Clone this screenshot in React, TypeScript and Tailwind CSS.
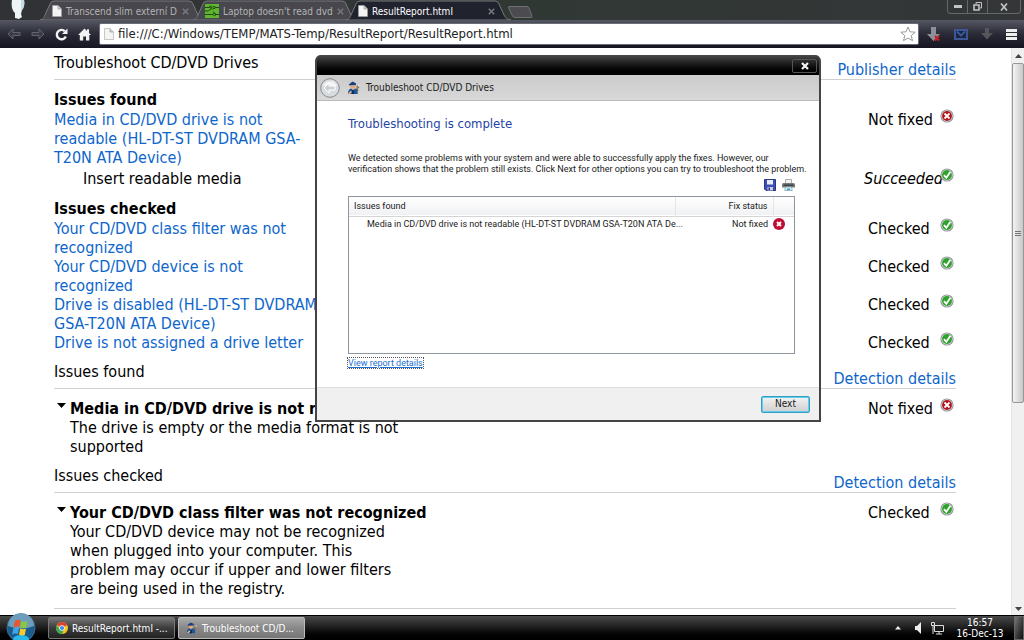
import type { ReactNode } from 'react';

type Status = 'ok' | 'error';

interface Issue {
  lines: string;
  label: string;
  status: Status;
}

const checkedIssues: Issue[] = [
  { lines: 'Your CD/DVD class filter was not\nrecognized', label: 'Checked', status: 'ok' },
  { lines: 'Your CD/DVD device is not\nrecognized', label: 'Checked', status: 'ok' },
  { lines: 'Drive is disabled (HL-DT-ST DVDRAM\nGSA-T20N ATA Device)', label: 'Checked', status: 'ok' },
  { lines: 'Drive is not assigned a drive letter', label: 'Checked', status: 'ok' },
];

function StatusIcon({ status }: { status: Status }) {
  return (
    <svg viewBox="0 0 14 14" className="-mt-px h-3.5 w-3.5 shrink-0">
      <circle cx="7" cy="7" r="6.6" fill="#8d9196" />
      <circle cx="7" cy="7" r="5.7" fill="#d5d8da" />
      <circle cx="7" cy="7" r="4.9" fill={status === 'ok' ? '#2ea32a' : '#b5121b'} />
      {status === 'ok' ? (
        <path d="M4 7.2 6.3 9.8 10.4 3.8" fill="none" stroke="#fff" strokeWidth="1.8" />
      ) : (
        <path d="M4.5 4.5l5 5M9.5 4.5L4.5 9.5" stroke="#fff" strokeWidth="1.8" />
      )}
    </svg>
  );
}

function PersonIcon({ className }: { className?: string }) {
  return (
    <svg viewBox="0 0 14 14" className={className}>
      <path d="M1.8 3.4 5.5.5 9.2 2.4 8.8 4.2 2.4 4.6Z" fill="#173f7c" />
      <path d="M3 4.4h5.2v2L5.8 8.2 3.4 6.8Z" fill="#e9a874" />
      <path d="M1 13c0-3.6 1.2-5.2 3.2-5.6L6 9l2-1.6c2 .4 2.8 2 2.8 5.600Z" fill="#1e5799" />
      <path d="M5.4 9h1.200l.6 4H4.800Z" fill="#0f2a50" />
      <path d="M1 12.800 3.600 10l1.400.8L3 13.200Z" fill="#f0b57f" />
      <path d="M11 10 9.800 7" fill="none" stroke="#7b6247" strokeWidth="1.400" />
      <circle cx="10.800" cy="5.800" r="1.600" fill="#8c7d6a" />
      <circle cx="11.800" cy="4.800" r=".8" fill="#fff" />
    </svg>
  );
}

function PageIcon() {
  return (
    <svg viewBox="0 0 10 12" className="h-3 w-2.5 shrink-0">
      <path d="M.5.5h5.6L9.5 4v7.5h-9Z" fill="#f4f4f4" stroke="#a5a5a5" strokeWidth=".6" />
      <path d="M6 .6V4h3.4" fill="#cfcfcf" stroke="#8c8c8c" strokeWidth=".6" />
    </svg>
  );
}

function BoardIcon() {
  return (
    <svg viewBox="0 0 14 14" className="h-3.5 w-3.5 shrink-0">
      <rect width="14" height="14" fill="#62b52e" />
      <g fill="none" stroke="#1d4a12" strokeWidth="1">
        <path d="M0 3.5h4.5M0 7h3.500l2-2h2M0 10.500h8M14 3.500H10M14 10.500h-3.500L8 7.500" />
        <circle cx="5.500" cy="3" r="1" />
        <circle cx="9" cy="3.500" r="1.200" />
        <circle cx="9.500" cy="10.500" r="1.200" />
      </g>
    </svg>
  );
}

function Tab({ title, icon, active }: { title: string; icon: ReactNode; active?: boolean }) {
  return (
    <div className={`relative -mr-3 h-5 w-[165px] ${active ? 'z-10' : ''}`}>
      <svg viewBox="0 0 165 20" preserveAspectRatio="none" className="absolute inset-0 h-full w-full">
        <path
          d="M0 20C4 19 4 17 5 15L10 4Q11 1 14 1H149Q152 1 153 4L158 15C160 18 160 19 165 20Z"
          fill={active ? '#20222e' : '#47474d'}
          stroke="#77797d"
        />
      </svg>
      <div className="relative flex h-full items-center gap-1 pt-0.5 pr-4 pl-3">
        {icon}
        <button className={`flex-1 text-left text-[10px] whitespace-nowrap ${active ? 'text-white' : 'text-[#b4b4b4]'}`}>
          {title}
        </button>
        <button aria-label="Close tab" className="text-[#77777c]">
          <svg viewBox="0 0 7 7" className="h-[7px] w-[7px]">
            <path d="M.8.8l5.4 5.4M6.2.8L.8 6.2" stroke="currentColor" strokeWidth="1.6" />
          </svg>
        </button>
      </div>
    </div>
  );
}

function WindowButtons() {
  return (
    <div className="mr-[3px] ml-auto flex h-3.5 rounded-b border border-t-0 border-[#63686a] text-[#c2c4c4]">
      <button aria-label="Minimize" className="flex w-5 items-center justify-center border-r border-[#63686a]">
        <span className="h-[3px] w-2 bg-[#c2c4c4]" />
      </button>
      <button aria-label="Restore" className="flex w-5 items-center justify-center border-r border-[#63686a]">
        <svg viewBox="0 0 9 9" className="h-[9px] w-[9px]" fill="none" stroke="currentColor">
          <path d="M3 2.5v-2h5.5V6H7" />
          <path d="M1 3h5v5H1Z" strokeWidth="1.6" />
        </svg>
      </button>
      <button aria-label="Close" className="flex w-8 items-center justify-center">
        <svg viewBox="0 0 8 8" className="h-2 w-2">
          <path d="M1 .5l6 7M7 .5L1 7.5" stroke="currentColor" strokeWidth="1.7" />
        </svg>
      </button>
    </div>
  );
}

function TabStrip() {
  return (
    <div className="flex h-5 bg-linear-to-r from-[#303235] via-[#303834] to-[#343638]">
      <div className="w-10">
        <svg viewBox="0 0 40 20" className="h-5 w-10">
          <path d="M12 0h12c1 4 0 8-2 10l-1 4 1 3-3 2-4-1 0-5c-3-2-4-8-3-13Z" fill="#eef3f6" />
          <path d="M21 0h3c1 5-1 9-3 11Z" fill="#c5dbe7" />
        </svg>
      </div>
      <Tab title="Transcend slim externí D" icon={<PageIcon />} />
      <Tab title="Laptop doesn't read dvd" icon={<BoardIcon />} />
      <Tab title="ResultReport.html" icon={<PageIcon />} active />
      <button aria-label="New tab" className="mt-1 ml-2">
        <svg viewBox="0 0 26 12" className="h-3 w-[26px]">
          <path d="M2 .5h18q1.5 0 2 1.5l3 8q.5 1.5-1 1.5H8q-2 0-2.5-1.5L1.5 2Q1 .5 2 .5Z" fill="#4b4b50" stroke="#6d6f72" />
        </svg>
      </button>
      <WindowButtons />
    </div>
  );
}

function Toolbar() {
  return (
    <div className="flex h-7 items-center bg-linear-to-b from-[#555762] via-[#2a2b37] to-[#141520] px-[7px]">
      <div className="flex w-[92px] items-center gap-2.5">
        <button aria-label="Back">
          <svg viewBox="0 0 14 12" className="h-3 w-3.5" fill="#3a3b44" stroke="#62646d">
            <path d="M1 6l5-5v3.5h7v3H6V11Z" />
          </svg>
        </button>
        <button aria-label="Forward">
          <svg viewBox="0 0 14 12" className="h-3 w-3.5" fill="#3a3b44" stroke="#62646d">
            <path d="M13 6L8 1v3.5H1v3h7V11Z" />
          </svg>
        </button>
        <button aria-label="Reload">
          <svg viewBox="0 0 13 13" className="h-[13px] w-[13px]">
            <path d="M9.8 3.2A4.7 4.7 0 1 0 10.8 8.5" fill="none" stroke="#f2f2f2" strokeWidth="2.4" />
            <path d="M12.5.5v5.5H7Z" fill="#f2f2f2" />
          </svg>
        </button>
        <button aria-label="Home">
          <svg viewBox="0 0 13 13" className="h-[13px] w-[13px]" fill="#f2f2f2">
            <path d="M6.5.5 9 3V1.2h2V5l2 2h-1.7v5.5H8V8.5H5.2v4H1.8V7H0Z" />
          </svg>
        </button>
      </div>
      <div className="flex h-[22px] flex-1 items-center gap-1 rounded-xs border border-[#6b6d75] bg-white pr-0.5 pl-1">
        <PageIcon />
        <input
          aria-label="Address"
          defaultValue="file:///C:/Windows/TEMP/MATS-Temp/ResultReport/ResultReport.html"
          className="min-w-0 flex-1 text-[13px] leading-5 text-[#222] outline-none"
        />
        <button aria-label="Bookmark">
          <svg viewBox="0 0 16 16" className="h-4 w-4">
            <path d="M8 1l2 4.8 5.2.4-4 3.4 1.3 5.1L8 12l-4.5 2.7 1.3-5.1-4-3.4L6 5.8Z" fill="#fff" stroke="#999" />
          </svg>
        </button>
      </div>
      <div className="ml-[7px] flex items-center gap-[13px]">
        <button aria-label="Download manager">
          <svg viewBox="0 0 15 15" className="h-[15px] w-[15px]">
            <path d="M5 0h5v7h4l-6.5 7L1 7h4Z" fill="#8d9299" />
            <path d="M9 9l4 4.5M13 9l-4 4.5" stroke="#c61f2b" strokeWidth="2" />
          </svg>
        </button>
        <button aria-label="Mail">
          <svg viewBox="0 0 14 11" className="h-[11px] w-3.5" fill="#1c2440" stroke="#3c5796" strokeWidth="2">
            <path d="M1 1h12v9H1Z" />
            <path d="M3 2.5l4 4 4-4" fill="none" />
          </svg>
        </button>
        <button aria-label="Downloads">
          <svg viewBox="0 0 12 12" className="h-3 w-3">
            <path d="M4 0h4v5h4l-6 6.5L0 5h4Z" fill="#55565a" />
          </svg>
        </button>
        <button aria-label="Menu" className="flex w-[11px] flex-col gap-px">
          <span className="h-[3px] bg-[#eee]" />
          <span className="h-[3px] bg-[#eee]" />
          <span className="h-[3px] bg-[#eee]" />
        </button>
      </div>
    </div>
  );
}

function SectionHeader({ title, link }: { title: string; link: string }) {
  return (
    <div className="flex h-8 justify-between border-b border-[#d0d0d0] pt-[5px]">
      <h2>{title}</h2>
      <a href="#details" className="mt-[7px] text-[#0e66cc]">
        {link}
      </a>
    </div>
  );
}

function StatusCell({ label, status, italic }: { label: string; status: Status; italic?: boolean }) {
  return (
    <div className="flex w-[88px] shrink-0">
      <span className={`whitespace-nowrap ${italic ? '-ml-1 w-[76px] italic' : 'w-[72px]'}`}>{label}</span>
      <StatusIcon status={status} />
    </div>
  );
}

function IssueRow({ lines, label, status }: Issue) {
  return (
    <div className="flex justify-between">
      <a href="#issue" className="whitespace-pre text-[#0e66cc]">
        {lines}
      </a>
      <StatusCell label={label} status={status} />
    </div>
  );
}

function IssueDetail({ title, text, label, status }: { title: string; text: string; label: string; status: Status }) {
  return (
    <div className="flex justify-between pt-2.5">
      <div className="flex gap-1">
        <svg viewBox="0 0 9 5" className="mt-1 ml-[3px] h-[5px] w-[9px]">
          <path d="M0 0h9L4.5 5Z" />
        </svg>
        <div>
          <h3 className="font-bold">{title}</h3>
          <p className="whitespace-pre">{text}</p>
        </div>
      </div>
      <StatusCell label={label} status={status} />
    </div>
  );
}

function Report() {
  return (
    <main className="min-w-0 flex-1 overflow-hidden pr-[55px] pl-[54px] text-base leading-[19px] text-black">
      <SectionHeader title="Troubleshoot CD/DVD Drives" link="Publisher details" />
      <h3 className="mt-2.5 mb-px font-bold">Issues found</h3>
      <IssueRow
        lines={'Media in CD/DVD drive is not\nreadable (HL-DT-ST DVDRAM GSA-\nT20N ATA Device)'}
        label="Not fixed"
        status="error"
      />
      <div className="mt-0.5 flex justify-between pl-[29px]">
        <span>Insert readable media</span>
        <StatusCell label="Succeeded" status="ok" italic />
      </div>
      <h3 className="mt-[11px] mb-px font-bold">Issues checked</h3>
      {checkedIssues.map((issue) => (
        <IssueRow key={issue.lines} {...issue} />
      ))}
      <div className="mt-[5px]">
        <SectionHeader title="Issues found" link="Detection details" />
        <IssueDetail
          title="Media in CD/DVD drive is not readable"
          text={'The drive is empty or the media format is not\nsupported'}
          label="Not fixed"
          status="error"
        />
      </div>
      <div className="mt-[5px]">
        <SectionHeader title="Issues checked" link="Detection details" />
        <IssueDetail
          title="Your CD/DVD class filter was not recognized"
          text={
            'Your CD/DVD device may not be recognized\nwhen plugged into your computer. This\nproblem may occur if upper and lower filters\nare being used in the registry.'
          }
          label="Checked"
          status="ok"
        />
      </div>
      <hr className="mt-2.5 border-[#d0d0d0]" />
    </main>
  );
}

function ScrollBar() {
  return (
    <div className="flex w-[13px] flex-col border-l border-[#e4e4e4] bg-[#f0f0f0]">
      <div className="flex h-[15px] items-center justify-center">
        <svg viewBox="0 0 7 4" className="h-1 w-[7px]">
          <path d="M0 4L3.5 0 7 4Z" fill="#444" />
        </svg>
      </div>
      <div className="flex h-3/5 flex-col items-center justify-center gap-px rounded-xs border border-[#979797] bg-linear-to-r from-[#f4f4f4] to-[#c8c8cc]">
        <span className="h-px w-1.5 bg-[#777]" />
        <span className="h-px w-1.5 bg-[#777]" />
        <span className="h-px w-1.5 bg-[#777]" />
      </div>
      <div className="mt-auto flex h-[13px] items-center justify-center">
        <svg viewBox="0 0 7 4" className="h-1 w-[7px]">
          <path d="M0 0h7L3.5 4Z" fill="#444" />
        </svg>
      </div>
    </div>
  );
}

function TroubleshootDialog() {
  return (
    <section
      role="dialog"
      aria-label="Troubleshoot CD/DVD Drives"
      className="absolute top-[55px] left-[315px] z-20 flex h-[367px] w-[506px] flex-col rounded-t-md border-2 border-t-0 border-[#444] bg-white text-[9px] text-[#1a1a1a]"
    >
      <div className="flex h-5 shrink-0 justify-end rounded-t bg-linear-to-b from-[#4a4a4a] to-black pr-0.5">
        <button aria-label="Close" className="mt-1 flex h-3.5 w-[25px] items-center justify-center rounded-xs border border-[#555]">
          <svg viewBox="0 0 8 8" className="h-2 w-2">
            <path d="M1 1l6 6M7 1L1 7" stroke="#f4f4f4" strokeWidth="2.2" />
          </svg>
        </button>
      </div>
      <header className="flex h-[26px] shrink-0 items-center border-b border-[#bbb] bg-linear-to-b from-[#cbcbcb] to-[#d8d8d8] pl-[3px]">
        <button aria-label="Back">
          <svg viewBox="0 0 20 20" className="h-5 w-5">
            <circle cx="10" cy="10" r="9.3" fill="#d9dcdf" stroke="#85898c" />
            <path d="M3 8a7.5 7.5 0 0 1 14 0Z" fill="#f1f3f4" />
            <path d="M4 10l5-5v3h6v4H9v3Z" fill="#cdd0d3" stroke="#fff" />
          </svg>
        </button>
        <PersonIcon className="ml-[7px] h-3.5 w-3.5" />
        <h1 className="ml-[5px] text-[10px]">Troubleshoot CD/DVD Drives</h1>
      </header>
      <div className="flex-1 pr-6 pl-[31px] font-['Roboto',sans-serif]">
        <h2 className="pt-[15px] font-['Tahoma','DejaVu_Sans_Condensed',sans-serif] text-[13px] leading-4 text-[#1f44a5]">
          Troubleshooting is complete
        </h2>
        <p className="mt-[21px] leading-[11px] whitespace-nowrap">
          We detected some problems with your system and were able to successfully apply the fixes. However, our
          <br />
          verification shows that the problem still exists. Click Next for other options you can try to troubleshoot the problem.
        </p>
        <div className="mt-1 flex h-[17px] justify-end gap-1.5">
          <button aria-label="Save" className="h-3">
            <svg viewBox="0 0 12 12" className="h-3 w-3">
              <path d="M.5.5h11v11H2L.5 10Z" fill="#3f4fb0" stroke="#29348a" />
              <path d="M3 1h6v4.5H3Z" fill="#e8ecfa" />
              <path d="M3.5 8h5.5v3.5H3.5Z" fill="#c9cde0" />
              <path d="M4.5 8.5H6v2.5H4.5Z" fill="#29348a" />
            </svg>
          </button>
          <button aria-label="Print" className="h-3">
            <svg viewBox="0 0 13 12" className="h-3 w-[13px]">
              <path d="M3.5.5h6v4h-6Z" fill="#f3f3f3" stroke="#999" strokeWidth=".8" />
              <path d="M1.5 4h10q1.5 0 1.5 1.5v3H0v-3Q0 4 1.5 4Z" fill="#777b80" />
              <path d="M1.5 5.5h10V7h-10Z" fill="#3d4044" />
              <path d="M3.5 8h6l.8 3.5H2.7Z" fill="#d9eef6" stroke="#8aa" strokeWidth=".8" />
              <path d="M5 9.5h3v1.5H5Z" fill="#3aa5d5" />
            </svg>
          </button>
        </div>
        <div className="h-[158px] border border-[#8e959d]">
          <table className="w-full table-fixed border-collapse">
            <thead>
              <tr className="h-[19px] border-b border-[#d5d5d5] bg-linear-to-b from-white to-[#f0f1f3] text-left">
                <th className="pl-[5px] font-normal">Issues found</th>
                <th className="w-[98px] border-x border-[#e4e6e8] pr-[5px] text-right font-normal">Fix status</th>
                <th aria-label="Icon" className="w-[21px]" />
              </tr>
            </thead>
            <tbody>
              <tr className="h-4">
                <td className="pl-[18px] whitespace-nowrap">Media in CD/DVD drive is not readable (HL-DT-ST DVDRAM GSA-T20N ATA De...</td>
                <td className="pr-[5px] text-right">Not fixed</td>
                <td>
                  <svg viewBox="0 0 12 12" className="h-3 w-3">
                    <circle cx="6" cy="6" r="6" fill="#c00d36" />
                    <path d="M4 4l4 4M8 4L4 8" stroke="#fff" strokeWidth="1.9" />
                  </svg>
                </td>
              </tr>
            </tbody>
          </table>
        </div>
        <a href="#report" className="mt-1 inline-block leading-[10px] text-[#1a6fd0] underline outline-1 outline-[#555] outline-dotted">
          View report details
        </a>
      </div>
      <footer className="flex h-[33px] shrink-0 items-center justify-end border-t border-[#dedede] bg-[#f0f0f0] pr-[9px]">
        <button className="h-[17px] w-[49px] rounded-xs border border-[#3c9cc0] bg-linear-to-b from-[#f3f3f3] to-[#cfcfcf] text-[10px] leading-[14px] ring-1 ring-[#5cd0ef] ring-inset">
          Next
        </button>
      </footer>
    </section>
  );
}

function TaskBar() {
  return (
    <footer className="flex h-[25px] shrink-0 items-center border-t border-black bg-linear-to-b from-[#4a4a4a] via-[#1c1c1c] to-black text-[10px] text-white">
      <button aria-label="Start" className="ml-1.5 w-[42px]">
        <svg viewBox="0 0 30 28" className="-mt-0.5 h-7 w-[30px]">
          <circle cx="15" cy="15" r="14" fill="#1b5c8e" stroke="#3d6c8b" />
          <path d="M2 13a13 13 0 0 1 26 0q-13 5-26 0Z" fill="#6d9dbb" />
          <ellipse cx="15" cy="26" rx="8" ry="4" fill="#29b8ec" />
          <path d="M9 8q3-2 5.5-.5L13.3 14q-3-1-5.8.5Z" fill="#e8562a" />
          <path d="M15.5 8q3 1.5 6 0l-1.3 6.5q-3 1.5-5.8 0Z" fill="#8cc63e" />
          <path d="M7.3 15.5q3-1.5 5.7-.5L11.8 21q-3-1-5.6.5Z" fill="#3fa4e8" />
          <path d="M14.2 15.5q3 1.5 5.8 0L18.8 22q-3 1-5.8-.5Z" fill="#fbc92b" />
        </svg>
      </button>
      <div className="flex flex-1 gap-[3px]">
        <button className="flex h-[22px] w-[127px] items-center gap-1 rounded-xs border border-[#777] bg-linear-to-b from-[#777] via-[#3c3c3c] to-[#222] pl-[7px]">
          <svg viewBox="0 0 12 12" className="h-3 w-3">
            <circle cx="6" cy="6" r="6" fill="#f3c81d" />
            <path d="M.8 3A6 6 0 0 1 11.2 3L6 6Z" fill="#dd4132" />
            <path d="M.8 3A6 6 0 0 0 6 12l2-4.5L3.5 7Z" fill="#3aa757" />
            <circle cx="6" cy="6" r="2.7" fill="#fff" />
            <circle cx="6" cy="6" r="2.1" fill="#4285f4" />
          </svg>
          ResultReport.html -...
        </button>
        <button className="flex h-[22px] w-[127px] items-center gap-1 rounded-xs border border-[#bbb] bg-linear-to-b from-[#aaa] via-[#888] to-[#777] pl-[7px]">
          <PersonIcon className="h-3 w-3" />
          Troubleshoot CD/D...
        </button>
      </div>
      <div className="flex h-full items-center">
        <svg viewBox="0 0 6 4" className="h-1 w-1.5">
          <path d="M0 3.5L3 0l3 3.5Z" fill="#eee" />
        </svg>
        <svg viewBox="0 0 6 12" className="ml-3.5 h-3 w-1.5">
          <path d="M0 4h2l4-4v12L2 8H0Z" fill="#eee" />
        </svg>
        <svg viewBox="0 0 13 13" className="ml-2.5 h-[13px] w-[13px]" fill="none" stroke="#ddd">
          <path d="M3.5 3.5h9v6h-9ZM5 12h6M8 9.5V12" />
          <path d="M.5.5h3v3h-3ZM2 3.5V12" />
        </svg>
        <div className="ml-3 w-12 text-center leading-[11px] whitespace-nowrap">
          16:57
          <br />
          16-Dec-13
        </div>
        <div className="ml-2.5 h-full w-2.5 border border-[#666] bg-linear-to-br from-[#777] to-[#111]" />
      </div>
    </footer>
  );
}

export default function App() {
  return (
    <div className="relative flex h-screen flex-col overflow-hidden bg-white font-['Tahoma','DejaVu_Sans_Condensed','DejaVu_Sans',sans-serif]">
      <TabStrip />
      <Toolbar />
      <div className="flex min-h-0 flex-1">
        <Report />
        <ScrollBar />
      </div>
      <TroubleshootDialog />
      <TaskBar />
    </div>
  );
}
